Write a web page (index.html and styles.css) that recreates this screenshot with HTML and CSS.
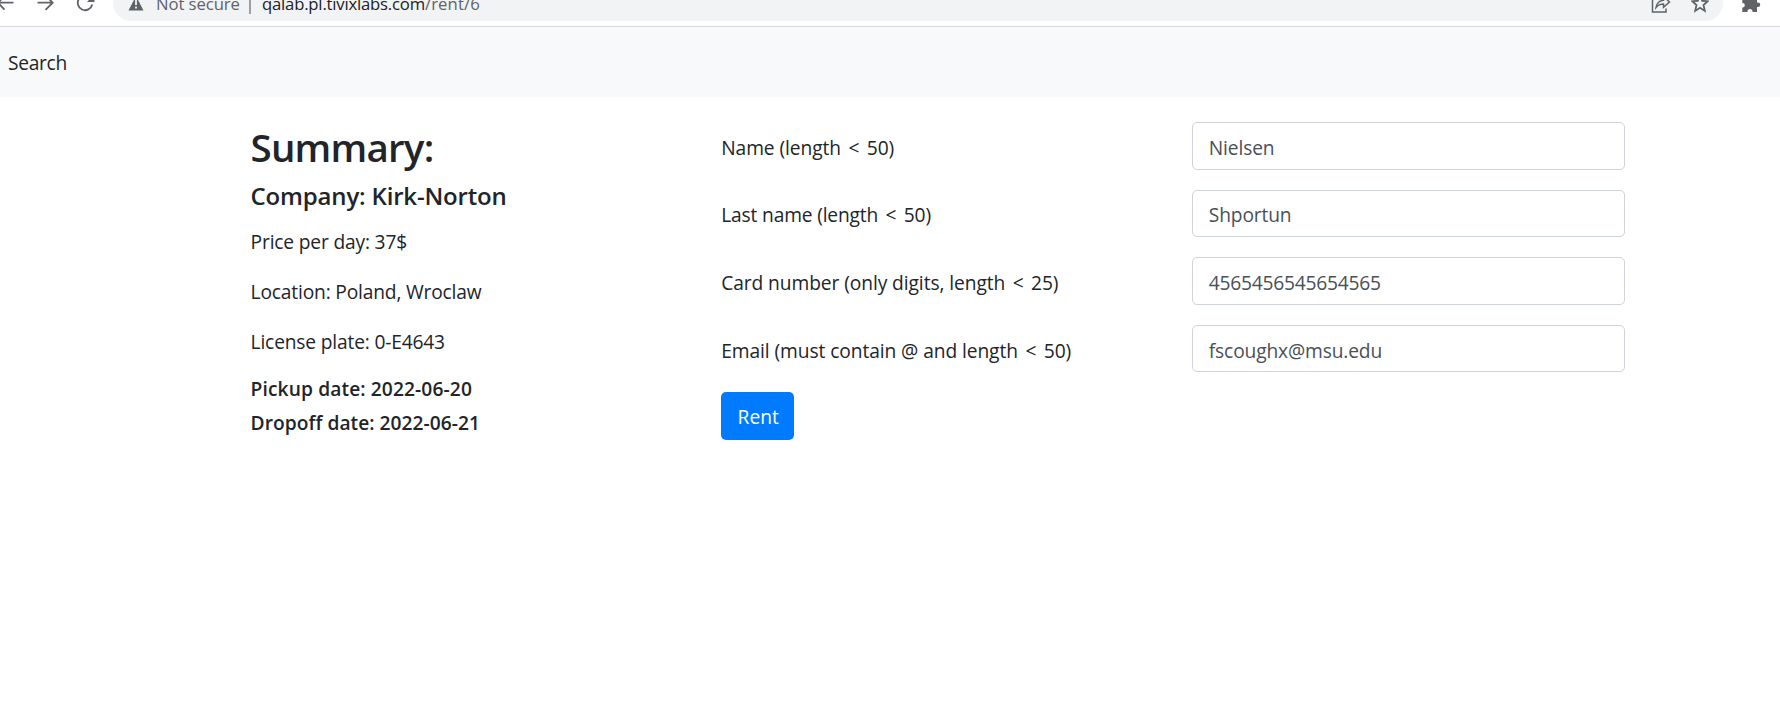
FILE: index.html
```html
<!DOCTYPE html>
<html lang="en">
<head>
<meta charset="utf-8">
<title>Rent</title>
<link rel="stylesheet" href="styles.css">
</head>
<body>
<div class="toolbar">
  <div class="nav-icons">
    <svg class="icon-back" width="14" height="26" viewBox="0 0 14 26"><path d="M13.5 2.7H-1M5 -4.5L-2 2.7L4.500 9.700"/></svg>
    <svg class="icon-forward" width="18" height="26" viewBox="0 0 18 26"><path d="M.5 2.700H15M8.500 -4.500L15.700 2.700L8.500 9.900"/></svg>
    <svg class="icon-reload" width="20" height="26" viewBox="0 0 20 26"><path d="M16.200 4.500A7.300 7.300 0 1 1 14.500 -2"/><path class="solid" d="M18.500 -6V2H11Z"/></svg>
  </div>
  <div class="omnibox">
    <svg class="icon-warning" width="16" height="21" viewBox="0 0 16 21"><path class="solid" d="M8 -4L15.500 10.500H.5Z"/><path class="mark" d="M8 0V5M8 6.500V8.500"/></svg>
    <span class="not-secure">Not secure</span>
    <span class="divider"></span>
    <span class="url"><span class="host">qalab.pl.tivixlabs.com</span><span class="path">/rent/6</span></span>
    <svg class="icon-share" width="20" height="21" viewBox="0 0 20 21"><path d="M1.500 -2V12H15V8.500"/><path d="M5 7.500C5.500 3 9 .3 12.500 .3V-3.500L18.500 2L12.500 7.300V4C9.500 4 7 5 5 7.500Z"/></svg>
    <svg class="icon-star" width="18" height="21" viewBox="0 0 18 21"><path d="M9 -5L11.200 .8L16.600 1.200L12.500 5L13.800 10.900L9 7.800L4.200 10.900L5.500 5L1.400 1.200L6.800 .8Z"/></svg>
  </div>
  <svg class="icon-extension" width="19" height="26" viewBox="0 0 19 26"><path class="solid" d="M.5 -4H15V2.500H16A2.200 2.200 0 0 1 16 7H15V12H10.500V11.500A2.300 2.300 0 0 0 5.500 11.500V12H.3V7.500H1A2.300 2.300 0 0 0 1 3H.3Z"/></svg>
</div>
<nav class="navbar"><a class="nav-link">Search</a></nav>
<main class="container">
  <section class="summary">
    <h1 class="title">Summary:</h1>
    <h4 class="company">Company: Kirk-Norton</h4>
    <p class="detail">Price per day: 37$</p>
    <p class="detail">Location: Poland, Wroclaw</p>
    <p class="detail">License plate: 0-E4643</p>
    <h6 class="date">Pickup date: 2022-06-20</h6>
    <h6 class="date date-dropoff">Dropoff date: 2022-06-21</h6>
  </section>
  <form class="labels">
    <label class="label"><span>Name (length <span class="lt">&lt;</span> 50)</span></label>
    <label class="label label-last"><span>Last name (length <span class="lt">&lt;</span> 50)</span></label>
    <label class="label"><span>Card number (only digits, length <span class="lt">&lt;</span> 25)</span></label>
    <label class="label"><span>Email (must contain @ and length <span class="lt">&lt;</span> 50)</span></label>
    <button class="button" type="button">Rent</button>
  </form>
  <section class="fields">
    <div class="field">Nielsen</div>
    <div class="field">Shportun</div>
    <div class="field field-tight">4565456545654565</div>
    <div class="field">fscoughx@msu.edu</div>
  </section>
</main>
</body>
</html>
```
FILE: styles.css
```css
* { box-sizing: border-box; }
body {
  margin: 0;
  background: #fff;
  color: #212529;
  font: 400 19.2px/30px "Open Sans", "Noto Sans", sans-serif;
  overflow: hidden;
}
h1, h4, h6, p { margin: 0; }
svg { display: block; fill: none; stroke: #5f6368; stroke-width: 1.8; flex: none; }
.solid { fill: #5f6368; stroke: none; }
.mark { stroke: #f1f3f4; }
.toolbar {
  display: flex;
  height: 27px;
  border-bottom: 1px solid #d5d7da;
  overflow: hidden;
}
.nav-icons { display: flex; width: 113px; flex: none; }
.icon-forward { margin-left: 23px; }
.icon-reload { margin-left: 21px; }
.omnibox {
  display: flex;
  width: 1610px;
  height: 21px;
  flex: none;
  padding-left: 15px;
  background: #f1f3f4;
  border-radius: 0 0 18px 18px;
  font-size: 16.7px;
  line-height: 24px;
  white-space: nowrap;
}
.not-secure, .url { margin-top: -8px; }
.not-secure { margin-left: 12px; width: 93px; color: #5f6368; letter-spacing: -.08px; }
.divider { width: 2px; height: 14px; background: #9aa0a6; }
.url { margin-left: 11px; color: #202124; }
.host { letter-spacing: -.2px; }
.path { color: #5f6368; letter-spacing: .1px; }
.icon-share { margin-left: auto; stroke-width: 1.5; }
.icon-star { margin: 0 14px 0 20px; }
.icon-extension { margin-left: 19px; }
.navbar {
  display: flex;
  align-items: center;
  height: 70px;
  padding: 1px 0 0 8px;
  background: #f8f9fa;
  letter-spacing: -.3px;
}
.container {
  display: grid;
  grid-template-columns: repeat(3, 433px);
  column-gap: 37.6px;
  padding: 25px 0 0 250.6px;
  white-space: nowrap;
}
.title { margin-top: 1px; font-size: 38.5px; font-weight: 600; line-height: 48px; letter-spacing: -.8px; }
.company { margin: 10px 0 16px; font-size: 24px; font-weight: 600; line-height: 30px; letter-spacing: -.18px; }
.detail { margin-bottom: 20px; letter-spacing: -.17px; }
.date { font-size: 19.2px; font-weight: 600; line-height: 24px; margin-bottom: 10px; letter-spacing: .11px; }
.date-dropoff { letter-spacing: .03px; }
.labels, .fields { display: flex; flex-direction: column; gap: 20px; align-items: flex-start; }
.label, .field { display: flex; align-items: center; height: 47.6px; }
.label { padding-top: 4px; letter-spacing: -.08px; }
.label-last { letter-spacing: -.16px; }
.lt { margin: 0 2.6px; }
.field {
  width: 433px;
  padding: 4px 16px 0;
  border: 1px solid #ced4da;
  border-radius: 5px;
  color: #495057;
  letter-spacing: -.14px;
}
.field-tight { letter-spacing: -.23px; }
.button {
  width: 73px;
  height: 48px;
  padding: 2px 0 0 1px;
  border: 0;
  border-radius: 5px;
  background: #007bff;
  color: #fff;
  font: inherit;
}
```
